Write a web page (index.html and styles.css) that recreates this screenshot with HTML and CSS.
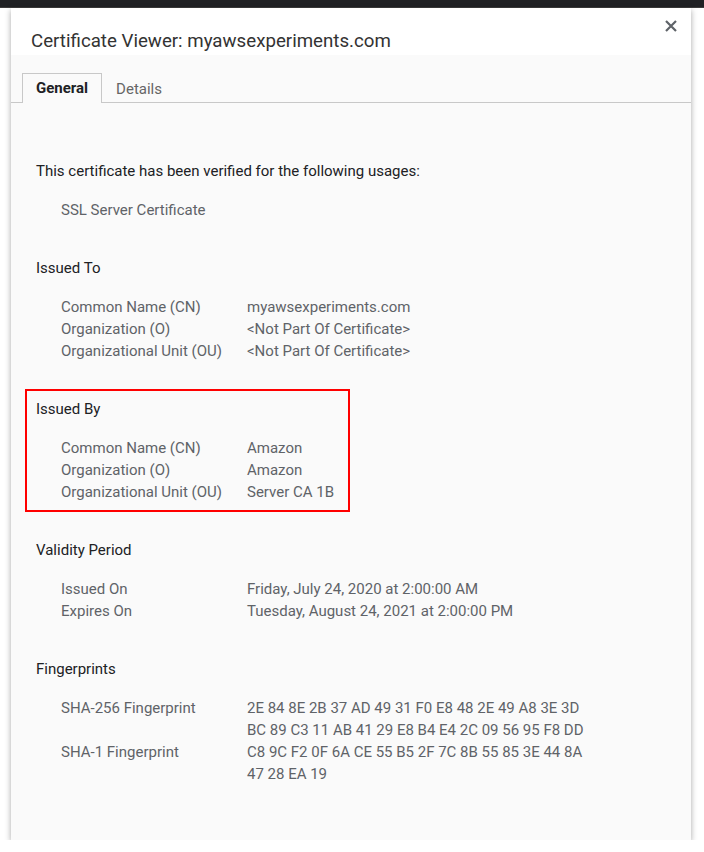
FILE: index.html
```html
<!DOCTYPE html>
<html lang="en">
<head>
    <meta charset="UTF-8">
    <title>Certificate Viewer</title>
    <link rel="stylesheet" href="styles.css">
</head>
<body>
    <div class="topbar"></div>

    <div class="dialog">
        <div class="title-bar">
            <h1>Certificate Viewer: myawsexperiments.com</h1>
            <button class="close" aria-label="Close">
                <svg width="12" height="12" viewBox="0 0 12 12"><path d="M1 1L11 11M11 1L1 11" stroke="#5f6368" stroke-width="2.2"/></svg>
            </button>
        </div>

        <div class="tabs">
            <div class="tab active">General</div>
            <div class="tab">Details</div>
        </div>

        <div class="content">
            <div class="section">
                <div class="heading">This certificate has been verified for the following usages:</div>
                <div class="rows">
                    <div class="label">SSL Server Certificate</div>
                </div>
            </div>

            <div class="section">
                <div class="heading">Issued To</div>
                <div class="rows">
                    <div class="label">Common Name (CN)</div><div class="value">myawsexperiments.com</div>
                    <div class="label">Organization (O)</div><div class="value">&lt;Not Part Of Certificate&gt;</div>
                    <div class="label">Organizational Unit (OU)</div><div class="value">&lt;Not Part Of Certificate&gt;</div>
                </div>
            </div>

            <div class="section boxed">
                <div class="heading">Issued By</div>
                <div class="rows">
                    <div class="label">Common Name (CN)</div><div class="value">Amazon</div>
                    <div class="label">Organization (O)</div><div class="value">Amazon</div>
                    <div class="label">Organizational Unit (OU)</div><div class="value">Server CA 1B</div>
                </div>
            </div>

            <div class="section">
                <div class="heading">Validity Period</div>
                <div class="rows">
                    <div class="label">Issued On</div><div class="value">Friday, July 24, 2020 at 2:00:00 AM</div>
                    <div class="label">Expires On</div><div class="value">Tuesday, August 24, 2021 at 2:00:00 PM</div>
                </div>
            </div>

            <div class="section">
                <div class="heading">Fingerprints</div>
                <div class="rows">
                    <div class="label">SHA-256 Fingerprint</div>
                    <div class="value">2E 84 8E 2B 37 AD 49 31 F0 E8 48 2E 49 A8 3E 3D<br>BC 89 C3 11 AB 41 29 E8 B4 E4 2C 09 56 95 F8 DD</div>
                    <div class="label">SHA-1 Fingerprint</div>
                    <div class="value">C8 9C F2 0F 6A CE 55 B5 2F 7C 8B 55 85 3E 44 8A<br>47 28 EA 19</div>
                </div>
            </div>
        </div>
    </div>
</body>
</html>
```

FILE: styles.css
```css
body {
    margin: 0;
    background: #fff;
    font-family: Roboto, "Liberation Sans", sans-serif;
    font-size: 15px;
    color: #202124;
}
.topbar {
    height: 7px;
    background: #202124;
    border-bottom: 1px solid #3c3c3c;
}
.dialog {
    width: 680px;
    height: 832px;
    margin-left: 11px;
    background: #fafafa;
    box-shadow: 0 2px 6px rgba(0,0,0,0.35);
    display: flex;
    flex-direction: column;
}
.title-bar {
    background: #fff;
    height: 47px;
    display: flex;
    justify-content: space-between;
    align-items: flex-start;
}
.title-bar h1 {
    margin: 21px 0 0 20px;
    font-size: 18.7px;
    font-weight: normal;
    line-height: 24px;
    color: #333;
}
.close {
    border: none;
    background: none;
    padding: 0;
    margin: 12px 14px 0 0;
    width: 12px;
    height: 12px;
    cursor: pointer;
}
.tabs {
    display: flex;
    align-items: flex-end;
    height: 47px;
    padding-left: 11px;
    border-bottom: 1px solid #c8c8c8;
}
.tab {
    height: 28px;
    line-height: 28px;
    padding: 0 13px;
    margin-bottom: -1px;
    color: #666;
    border: 1px solid transparent;
    border-bottom: none;
}
.tab.active {
    font-weight: bold;
    color: #202124;
    border-color: #c8c8c8;
    background: #fafafa;
    height: 29px;
}
.content {
    padding: 57px 25px 0;
    line-height: 22px;
}
.section {
    margin-bottom: 36px;
}
.heading {
    color: #202124;
}
.rows {
    display: grid;
    grid-template-columns: 186px auto;
    margin: 17px 0 0 25px;
    color: #5f6368;
}
.boxed {
    width: 325px;
    box-sizing: border-box;
    margin: -9px 0 27px -11px;
    padding: 7px 9px;
    border: 2px solid #ff0000;
}
```
